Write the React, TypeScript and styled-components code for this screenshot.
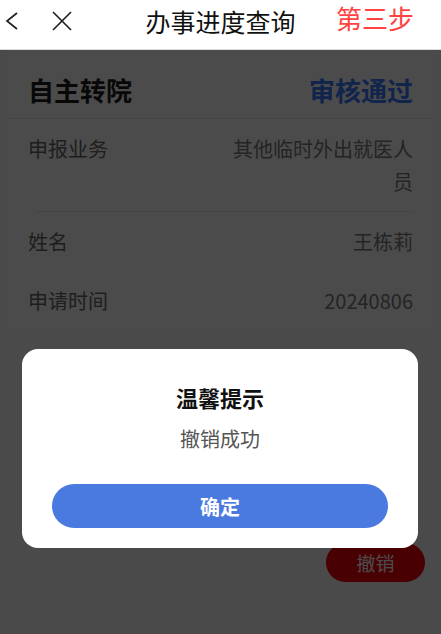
import React from 'react';
import { styled, createGlobalStyle } from 'styled-components';

const GlobalStyle = createGlobalStyle`
  html, body {
    margin: 0;
    padding: 0;
    height: 100%;
  }
  #root {
    height: 100%;
  }
  body {
    font-family: 'Noto Sans CJK SC', 'Noto Sans', sans-serif;
    background: #ffffff;
  }
`;

const Page = styled.div`
  display: flex;
  flex-direction: column;
  width: 441px;
  height: 634px;
  overflow: hidden;
`;

const Header = styled.header`
  display: grid;
  grid-template-columns: 1fr auto 1fr;
  align-items: center;
  height: 50px;
  padding-bottom: 8px;
  box-sizing: border-box;
  background: #ffffff;
  border-bottom: 1px solid #dcdcdc;
  flex-shrink: 0;
`;

const NavIcons = styled.div`
  display: flex;
  align-items: center;
  gap: 32px;
  padding-left: 4px;
  color: #222222;
`;

const Title = styled.h1`
  margin: 0;
  font-size: 25px;
  font-weight: 400;
  line-height: 30px;
  color: #111111;
`;

const Step = styled.span`
  justify-self: end;
  padding-right: 27px;
  margin-bottom: 6px;
  font-size: 26px;
  line-height: 30px;
  color: #ff4242;
`;

const Body = styled.main`
  position: relative;
  flex: 1;
  display: flex;
  flex-direction: column;
  background: #fbfbfb;
`;

const Card = styled.section`
  margin: 0 8px;
  padding: 0 20px;
  background: #ffffff;
`;

const CardHead = styled.div`
  display: flex;
  align-items: center;
  justify-content: space-between;
  height: 69px;
  padding: 11px 20px 0;
  box-sizing: border-box;
  margin: 0 -20px;
  border-bottom: 1px solid #e6e6e6;
`;

const CardTitle = styled.span`
  font-size: 26px;
  font-weight: 700;
  color: #1e1e1e;
`;

const Status = styled.span`
  font-size: 26px;
  font-weight: 700;
  color: #3a7cff;
`;

const Row = styled.div`
  display: flex;
  justify-content: space-between;
  align-items: flex-start;
  padding: 13px 0;
  font-size: 20px;
  line-height: 33px;
`;

const Label = styled.span`
  flex-shrink: 0;
  color: #686868;
`;

const Value = styled.span`
  max-width: 184px;
  text-align: right;
  color: #7a7a7a;
`;

const Divider = styled.div`
  height: 1px;
  margin-left: 8px;
  background: #e8e8e8;
`;

const Actions = styled.div`
  display: flex;
  justify-content: flex-end;
  margin-top: 213px;
  padding-right: 16px;
`;

const RevokeButton = styled.button`
  width: 99px;
  height: 39px;
  border: none;
  border-radius: 20px;
  background: #f5000a;
  color: #ffffff;
  font-family: inherit;
  font-size: 19px;
`;

const Overlay = styled.div`
  position: absolute;
  inset: 0;
  display: flex;
  flex-direction: column;
  padding: 299px 23px 0 22px;
  background: rgba(0, 0, 0, 0.705);
`;

const Dialog = styled.div`
  display: flex;
  flex-direction: column;
  align-items: center;
  padding: 33px 30px 20px;
  border-radius: 16px;
  background: #ffffff;
`;

const DialogTitle = styled.h2`
  margin: 0;
  font-size: 22px;
  font-weight: 700;
  line-height: 30px;
  color: #111111;
`;

const DialogMessage = styled.p`
  margin: 12px 0 30px;
  font-size: 20px;
  line-height: 30px;
  color: #555555;
`;

const ConfirmButton = styled.button`
  width: 100%;
  height: 44px;
  border: none;
  border-radius: 22px;
  background: #4a7ae0;
  color: #ffffff;
  font-family: inherit;
  font-size: 20px;
  font-weight: 700;
`;

const BackIcon = () => (
  <svg width="16" height="20" viewBox="0 0 16 20" fill="none">
    <polyline points="13,2 3,10 13,18" stroke="currentColor" strokeWidth="1.7" strokeLinejoin="miter" />
  </svg>
);

const CloseIcon = () => (
  <svg width="20" height="20" viewBox="0 0 20 20" fill="none">
    <path d="M1 1 L19 19 M19 1 L1 19" stroke="currentColor" strokeWidth="1.7" />
  </svg>
);

const rows = [
  { label: '申报业务', value: '其他临时外出就医人员', divided: true },
  { label: '姓名', value: '王栋莉', divided: false },
  { label: '申请时间', value: '20240806', divided: false },
];

export default function App() {
  return (
    <Page>
      <GlobalStyle />
      <Header>
        <NavIcons>
          <BackIcon />
          <CloseIcon />
        </NavIcons>
        <Title>办事进度查询</Title>
        <Step>第三步</Step>
      </Header>
      <Body>
        <Card>
          <CardHead>
            <CardTitle>自主转院</CardTitle>
            <Status>审核通过</Status>
          </CardHead>
          {rows.map((row) => (
            <React.Fragment key={row.label}>
              <Row>
                <Label>{row.label}</Label>
                <Value>{row.value}</Value>
              </Row>
              {row.divided && <Divider />}
            </React.Fragment>
          ))}
        </Card>
        <Actions>
          <RevokeButton>撤销</RevokeButton>
        </Actions>
        <Overlay>
          <Dialog>
            <DialogTitle>温馨提示</DialogTitle>
            <DialogMessage>撤销成功</DialogMessage>
            <ConfirmButton>确定</ConfirmButton>
          </Dialog>
        </Overlay>
      </Body>
    </Page>
  );
}
